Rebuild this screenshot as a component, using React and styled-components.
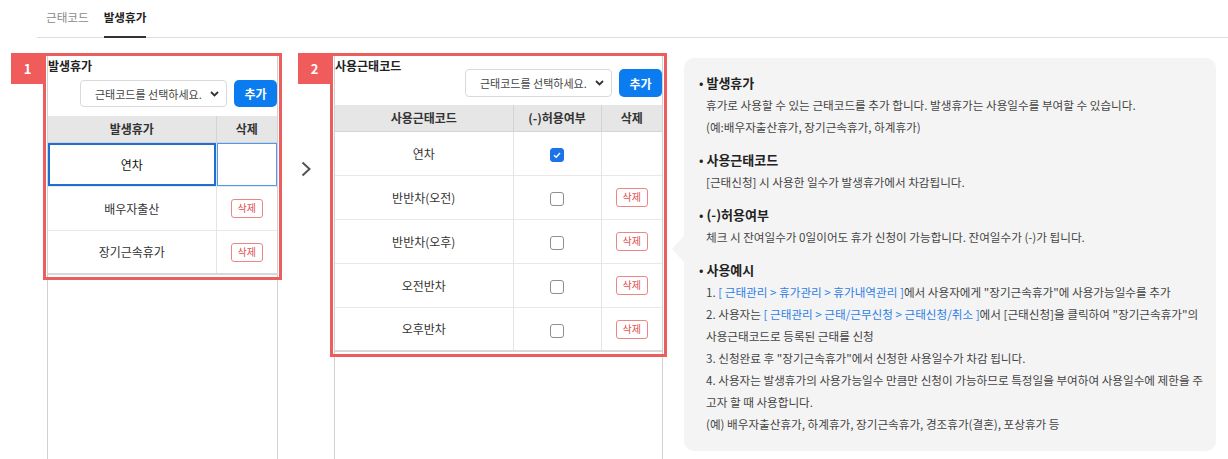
import React from "react";
import styled, { createGlobalStyle } from "styled-components";

const GlobalStyle = createGlobalStyle`
  html, body {
    margin: 0;
    padding: 0;
    background: #ffffff;
  }
  body {
    font-family: "Noto Sans CJK KR", "Noto Sans", sans-serif;
    color: #333333;
    font-size: 13px;
  }
  * { box-sizing: border-box; }
`;

const Page = styled.div`
  height: 100vh;
  display: flex;
  flex-direction: column;
  padding-left: 37px;
  overflow: hidden;
`;

const Tabs = styled.div`
  display: flex;
  gap: 15px;
  height: 38px;
  padding-left: 9px;
  border-bottom: 1px solid #dddddd;
`;

const Tab = styled.div`
  display: flex;
  align-items: center;
  font-size: 11.6px;
  color: ${p => (p.$active ? "#222" : "#8a8a8a")};
  font-weight: ${p => (p.$active ? 700 : 400)};
  border-bottom: 2px solid ${p => (p.$active ? "#333" : "transparent")};
  margin-bottom: -1px;
  padding-bottom: 2px;
`;

const Body = styled.div`
  flex: 1;
  display: flex;
  align-items: stretch;
  padding-left: 10px;
  margin-top: 15px;
`;

const Panel = styled.div`
  width: ${p => p.$width}px;
  flex: 0 0 auto;
  border-left: 1px solid #d2d2d2;
  border-right: 1px solid #d2d2d2;
  padding-top: 5px;
`;

const Highlight = styled.div`
  position: relative;
  outline: 3px solid #ec5e5e;
  outline-offset: 2px;
`;

const Badge = styled.div`
  position: absolute;
  top: -5px;
  left: -37px;
  width: 33px;
  height: 31px;
  background: #f05b5b;
  color: #fff;
  font-weight: 700;
  font-size: 13px;
  display: flex;
  align-items: center;
  justify-content: center;
`;

const PanelHead = styled.div`
  display: flex;
  flex-direction: ${p => (p.$inline ? "row" : "column")};
  align-items: ${p => (p.$inline ? "flex-start" : "stretch")};
`;

const PanelTitle = styled.div`
  flex: 1;
  font-size: 12px;
  font-weight: 700;
  line-height: 16px;
  color: #222;
`;

const Controls = styled.div`
  display: flex;
  justify-content: flex-end;
  gap: 7px;
  margin-top: ${p => p.$top}px;
  height: ${p => p.$h}px;
`;

const SelectWrap = styled.div`
  position: relative;
  width: 147px;
  height: 100%;
`;

const Select = styled.select`
  appearance: none;
  -webkit-appearance: none;
  width: 100%;
  height: 100%;
  border: 1px solid #d9d9d9;
  border-radius: 4px;
  background: #fff;
  padding: 0 24px 0 14px;
  font-family: inherit;
  font-size: 11px;
  color: #444;
`;

const Chevron = styled.svg`
  position: absolute;
  right: 8px;
  top: 50%;
  margin-top: -4px;
  pointer-events: none;
`;

const AddButton = styled.button`
  width: 43px;
  height: 100%;
  border: none;
  border-radius: 5px;
  background: #0b7cf0;
  color: #fff;
  font-family: inherit;
  font-weight: 700;
  font-size: 12px;
  padding: 0;
`;

const Table = styled.table`
  width: 100%;
  border-collapse: collapse;
  margin-top: ${p => p.$top}px;
  border-bottom: 2px solid #d8d8d8;
  table-layout: fixed;
`;

const Th = styled.th`
  height: 26px;
  background: #e6e6e6;
  font-size: 12px;
  font-weight: 700;
  color: #333;
  border-left: 1px solid #d4d4d4;
  border-bottom: 1px solid #d4d4d4;
  padding: 0;
  width: ${p => (p.$w ? `${p.$w}px` : "auto")};
  &:first-child { border-left: none; }
`;

const Td = styled.td`
  height: 44px;
  text-align: center;
  font-size: 12px;
  color: ${p => (p.$focus ? "#111" : "#333")};
  border-left: 1px solid #e4e4e4;
  border-top: 1px solid #e8e8e8;
  padding: 0;
  box-shadow: ${p =>
    p.$focus === "strong"
      ? "inset 0 0 0 2px #1f6fd0"
      : p.$focus === "soft"
      ? "inset 0 0 0 1px #4d9bf0"
      : "none"};
  &:first-child { border-left: none; }
`;

const DeleteButton = styled.button`
  width: 32px;
  height: 19px;
  border: 1px solid #ec8585;
  border-radius: 3px;
  background: #fff;
  color: #e2504f;
  font-family: inherit;
  font-size: 10px;
  padding: 0;
  line-height: 1;
`;

const Check = styled.span`
  display: inline-flex;
  width: 14px;
  height: 14px;
  border-radius: 3px;
  align-items: center;
  justify-content: center;
  vertical-align: middle;
  background: ${p => (p.$on ? "#1a73e8" : "#fff")};
  border: 1px solid ${p => (p.$on ? "#1a73e8" : "#8e8e8e")};
`;

const ArrowCol = styled.div`
  width: 56px;
  flex: 0 0 auto;
  display: flex;
  justify-content: center;
  padding-top: 108px;
`;

const Info = styled.div`
  position: relative;
  align-self: flex-start;
  width: 532px;
  margin-left: 21px;
  margin-top: 5px;
  background: #f4f4f4;
  border-radius: 10px;
  padding: 14px 10px 16px 15px;
`;

const Notch = styled.div`
  position: absolute;
  left: -12px;
  top: 178px;
  width: 0;
  height: 0;
  border-top: 13px solid transparent;
  border-bottom: 13px solid transparent;
  border-right: 12px solid #f4f4f4;
`;

const Section = styled.div`
  & + & { margin-top: 11px; }
`;

const SectionTitle = styled.div`
  font-size: 13px;
  font-weight: 700;
  color: #222;
  line-height: 22px;
  &::before {
    content: "•";
    margin-right: 3px;
    font-weight: 400;
  }
`;

const Line = styled.div`
  padding-left: 7px;
  font-size: 11.6px;
  line-height: 22px;
  color: #444;
  word-break: break-all;
`;

const Link = styled.span`
  color: #2f7fe6;
`;

function ChevronDown() {
  return (
    <Chevron width="9" height="8" viewBox="0 0 9 8">
      <polyline points="1,2 4.5,5.5 8,2" fill="none" stroke="#333" strokeWidth="1.8" />
    </Chevron>
  );
}

function CheckBox({ on }) {
  return (
    <Check $on={on}>
      {on && (
        <svg width="10" height="10" viewBox="0 0 10 10">
          <polyline points="2,5.2 4.2,7.2 8,3" fill="none" stroke="#fff" strokeWidth="1.5" />
        </svg>
      )}
    </Check>
  );
}

function AddControls({ top, h }) {
  return (
    <Controls $top={top} $h={h}>
      <SelectWrap>
        <Select defaultValue="">
          <option value="">근태코드를 선택하세요.</option>
        </Select>
        <ChevronDown />
      </SelectWrap>
      <AddButton>추가</AddButton>
    </Controls>
  );
}

const leaves = [
  { name: "연차", focus: true },
  { name: "배우자출산", del: true },
  { name: "장기근속휴가", del: true },
];

const codes = [
  { name: "연차", allow: true },
  { name: "반반차(오전)", del: true },
  { name: "반반차(오후)", del: true },
  { name: "오전반차", del: true },
  { name: "오후반차", del: true },
];

function App() {
  return (
    <>
      <GlobalStyle />
      <Page>
        <Tabs>
          <Tab>근태코드</Tab>
          <Tab $active>발생휴가</Tab>
        </Tabs>
        <Body>
          <Panel $width={231}>
            <Highlight>
              <Badge>1</Badge>
              <PanelHead>
                <PanelTitle>발생휴가</PanelTitle>
                <AddControls top={6} h={27} />
              </PanelHead>
              <Table $top={9}>
                <thead>
                  <tr>
                    <Th>발생휴가</Th>
                    <Th $w={61}>삭제</Th>
                  </tr>
                </thead>
                <tbody>
                  {leaves.map(l => (
                    <tr key={l.name}>
                      <Td $focus={l.focus ? "strong" : undefined}>{l.name}</Td>
                      <Td $focus={l.focus ? "soft" : undefined}>
                        {l.del && <DeleteButton>삭제</DeleteButton>}
                      </Td>
                    </tr>
                  ))}
                </tbody>
              </Table>
            </Highlight>
          </Panel>

          <ArrowCol>
            <svg width="12" height="16" viewBox="0 0 12 16">
              <polyline points="2.5,1.5 9.5,8 2.5,14.5" fill="none" stroke="#555" strokeWidth="2" />
            </svg>
          </ArrowCol>

          <Panel $width={329}>
            <Highlight>
              <Badge>2</Badge>
              <PanelHead $inline>
                <PanelTitle>사용근태코드</PanelTitle>
                <AddControls top={11} h={28} />
              </PanelHead>
              <Table $top={8}>
                <thead>
                  <tr>
                    <Th>사용근태코드</Th>
                    <Th $w={88}>(-)허용여부</Th>
                    <Th $w={61}>삭제</Th>
                  </tr>
                </thead>
                <tbody>
                  {codes.map(c => (
                    <tr key={c.name}>
                      <Td>{c.name}</Td>
                      <Td>
                        <CheckBox on={c.allow} />
                      </Td>
                      <Td>{c.del && <DeleteButton>삭제</DeleteButton>}</Td>
                    </tr>
                  ))}
                </tbody>
              </Table>
            </Highlight>
          </Panel>

          <Info>
            <Notch />
            <Section>
              <SectionTitle>발생휴가</SectionTitle>
              <Line>휴가로 사용할 수 있는 근태코드를 추가 합니다. 발생휴가는 사용일수를 부여할 수 있습니다.</Line>
              <Line>(예:배우자출산휴가, 장기근속휴가, 하계휴가)</Line>
            </Section>
            <Section>
              <SectionTitle>사용근태코드</SectionTitle>
              <Line>[근태신청] 시 사용한 일수가 발생휴가에서 차감됩니다.</Line>
            </Section>
            <Section>
              <SectionTitle>(-)허용여부</SectionTitle>
              <Line>체크 시 잔여일수가 0일이어도 휴가 신청이 가능합니다. 잔여일수가 (-)가 됩니다.</Line>
            </Section>
            <Section>
              <SectionTitle>사용예시</SectionTitle>
              <Line>
                1. <Link>[ 근태관리 &gt; 휴가관리 &gt; 휴가내역관리 ]</Link>에서 사용자에게 "장기근속휴가"에 사용가능일수를 추가
              </Line>
              <Line>
                2. 사용자는 <Link>[ 근태관리 &gt; 근태/근무신청 &gt; 근태신청/취소 ]</Link>에서 [근태신청]을 클릭하여 "장기근속휴가"의 사용근태코드로 등록된 근태를 신청
              </Line>
              <Line>3. 신청완료 후 "장기근속휴가"에서 신청한 사용일수가 차감 됩니다.</Line>
              <Line>4. 사용자는 발생휴가의 사용가능일수 만큼만 신청이 가능하므로 특정일을 부여하여 사용일수에 제한을 주고자 할 때 사용합니다.</Line>
              <Line>(예) 배우자출산휴가, 하계휴가, 장기근속휴가, 경조휴가(결혼), 포상휴가 등</Line>
            </Section>
          </Info>
        </Body>
      </Page>
    </>
  );
}

export default App;
